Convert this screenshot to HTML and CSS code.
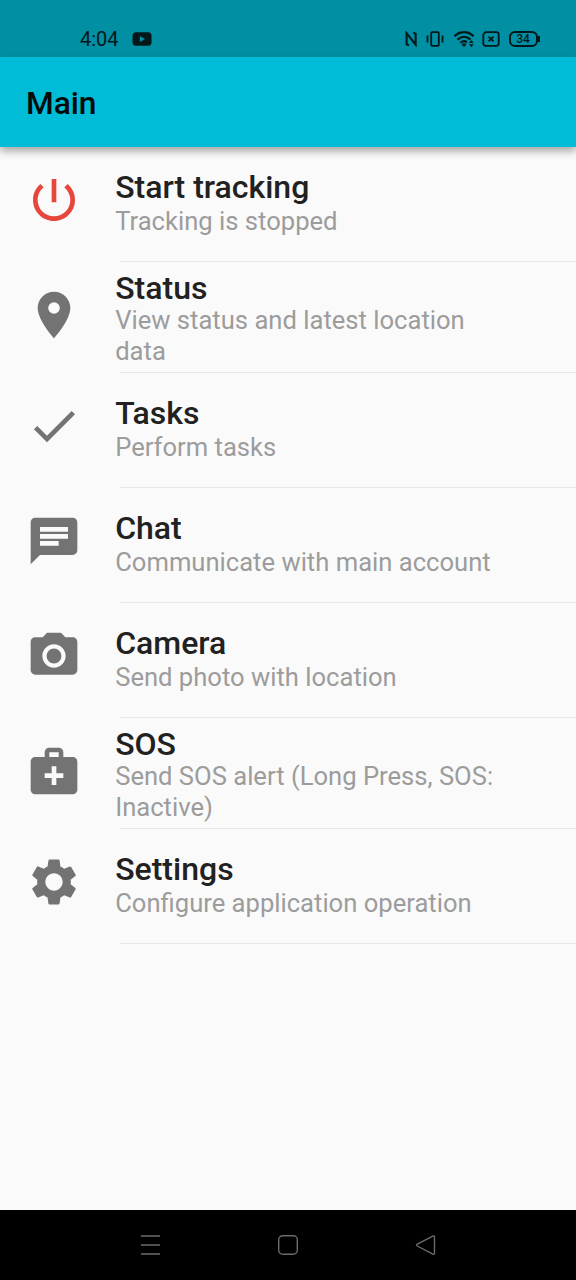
FILE: index.html
```html
<!DOCTYPE html>
<html lang="en">
<head>
    <meta charset="UTF-8">
    <meta name="viewport" content="width=device-width, initial-scale=1.0">
    <title>Main</title>
    <link rel="stylesheet" href="styles.css">
</head>
<body>
    <div class="status-bar">
        <span class="clock">4:04</span>
        <svg class="youtube" width="20" height="14" viewBox="0 0 20 14"><rect x="0.5" y="0.3" width="19" height="13.4" rx="3.5" fill="#04181b"/><path d="M7.8 4v6l5.2-3z" fill="#008fa3"/></svg>
        <div class="status-icons">
            <svg class="nfc" width="12" height="16" viewBox="0 0 12 16"><path d="M4 14.400L1.600 13.400V2.200L10.600 13.600V2.600L8.200 1.600"/></svg>
            <svg class="vibrate" width="18" height="16" viewBox="0 0 18 16"><rect x="5.200" y="1.200" width="7.600" height="13.600" rx="1"/><path d="M1.500 4.500v7M16.500 4.500v7"/></svg>
            <svg class="wifi" width="22" height="18" viewBox="0 0 22 18"><path d="M1.500 6.200C7 .700 15 .700 20.500 6.200M4.500 9.600c4-3.800 9-3.800 13 0M7.500 12.800c2.200-1.900 4.600-1.900 6.500-.500" stroke-width="2.200"/><path d="M8.500 14.500l2.500-1.500 2.500 1.500L11 17z" class="solid"/><path d="M16 13l2.300-3 2.300 3zM16 14.300l2.300 3 2.300-3z" class="solid"/></svg>
            <svg class="sim" width="18" height="16" viewBox="0 0 18 16"><path d="M3.500 1.200h11q2.200 0 2.200 2.200v9.200q0 2.200-2.200 2.200h-11q-2.200 0-2.200-2.200V3.400z"/><path d="M6.500 5.600l5 4.800M11.500 5.600l-5 4.800"/></svg>
            <div class="battery">34</div>
        </div>
    </div>
    <header class="app-bar">
        <h1>Main</h1>
    </header>
    <ul class="menu">
        <li class="menu-item">
            <svg class="icon power" viewBox="0 0 24 24"><path d="M13 3h-2v10h2V3zm4.830 2.170l-1.420 1.420C17.990 7.860 19 9.810 19 12c0 3.870-3.130 7-7 7s-7-3.130-7-7c0-2.190 1.010-4.140 2.580-5.420L6.170 5.170C4.230 6.820 3 9.260 3 12c0 4.970 4.030 9 9 9s9-4.030 9-9c0-2.740-1.230-5.180-3.170-6.830z"/></svg>
            <div class="text">
                <h2>Start tracking</h2>
                <p>Tracking is stopped</p>
            </div>
        </li>
        <li class="menu-item two-line">
            <svg class="icon" viewBox="0 0 24 24"><path d="M12 2C8.130 2 5 5.130 5 9c0 5.250 7 13 7 13s7-7.750 7-13c0-3.870-3.130-7-7-7zm0 9.500a2.500 2.500 0 0 1 0-5 2.500 2.500 0 0 1 0 5z"/></svg>
            <div class="text">
                <h2>Status</h2>
                <p>View status and latest location data</p>
            </div>
        </li>
        <li class="menu-item">
            <svg class="icon" viewBox="0 0 24 24"><path d="M9 16.170L4.830 12l-1.420 1.410L9 19 21 7l-1.410-1.410z"/></svg>
            <div class="text">
                <h2>Tasks</h2>
                <p>Perform tasks</p>
            </div>
        </li>
        <li class="menu-item">
            <svg class="icon" viewBox="0 0 24 24"><path d="M20 2H4c-1.100 0-1.990.900-1.990 2L2 22l4-4h14c1.100 0 2-.900 2-2V4c0-1.100-.900-2-2-2zM6 9h12v2H6V9zm8 5H6v-2h8v2zm4-6H6V6h12v2z"/></svg>
            <div class="text">
                <h2>Chat</h2>
                <p>Communicate with main account</p>
            </div>
        </li>
        <li class="menu-item">
            <svg class="icon" viewBox="0 0 24 24"><circle cx="12" cy="12" r="3.200"/><path d="M9 2L7.170 4H4c-1.100 0-2 .900-2 2v12c0 1.100.900 2 2 2h16c1.100 0 2-.900 2-2V6c0-1.100-.900-2-2-2h-3.170L15 2H9zm3 15c-2.760 0-5-2.240-5-5s2.240-5 5-5 5 2.240 5 5-2.240 5-5 5z"/></svg>
            <div class="text">
                <h2>Camera</h2>
                <p>Send photo with location</p>
            </div>
        </li>
        <li class="menu-item two-line">
            <svg class="icon" viewBox="0 0 24 24"><path d="M20 6h-4V4c0-1.100-.900-2-2-2h-4c-1.100 0-2 .900-2 2v2H4c-1.100 0-2 .900-2 2v12c0 1.100.900 2 2 2h16c1.100 0 2-.900 2-2V8c0-1.100-.900-2-2-2zM10 4h4v2h-4V4zm6 11h-3v3h-2v-3H8v-2h3v-3h2v3h3v2z"/></svg>
            <div class="text">
                <h2>SOS</h2>
                <p>Send SOS alert (Long Press, SOS: Inactive)</p>
            </div>
        </li>
        <li class="menu-item">
            <svg class="icon" viewBox="0 0 24 24"><path d="M19.140 12.940c.040-.300.060-.610.060-.940 0-.320-.020-.640-.070-.940l2.030-1.580c.180-.140.230-.410.120-.610l-1.920-3.320c-.120-.220-.370-.290-.590-.220l-2.390.960c-.500-.380-1.030-.700-1.620-.940l-.360-2.540c-.040-.240-.240-.410-.480-.410h-3.840c-.240 0-.430.170-.470.410l-.360 2.540c-.590.240-1.130.570-1.620.940l-2.390-.960c-.220-.080-.470 0-.590.220L2.740 8.870c-.120.210-.080.470.120.610l2.030 1.580c-.050.300-.090.630-.090.940s.020.640.070.940l-2.030 1.580c-.180.140-.230.410-.120.610l1.920 3.320c.120.220.370.290.590.220l2.390-.960c.500.380 1.030.700 1.620.940l.360 2.540c.050.240.240.410.480.410h3.840c.240 0 .440-.170.470-.410l.360-2.540c.590-.240 1.130-.560 1.620-.940l2.390.960c.220.080.470 0 .590-.220l1.920-3.320c.120-.220.070-.470-.120-.610l-2.010-1.580zM12 15.700c-2.040 0-3.700-1.660-3.700-3.700s1.660-3.700 3.700-3.700 3.700 1.660 3.700 3.700-1.660 3.700-3.700 3.700z"/></svg>
            <div class="text">
                <h2>Settings</h2>
                <p>Configure application operation</p>
            </div>
        </li>
    </ul>
    <nav class="nav-bar">
        <svg width="22" height="22" viewBox="0 0 22 22"><path d="M2 2h19M2 11h19M2 20h19"/></svg>
        <svg width="22" height="22" viewBox="0 0 22 22"><rect x="1.700" y="1.700" width="18.600" height="18.600" rx="4"/></svg>
        <svg width="22" height="22" viewBox="0 0 22 22"><path d="M2.300 10.200L17.800 2.100q1.700-.800 1.700 1v16q0 1.800-1.700 1L2.300 12q-1.500-.900 0-1.800z"/></svg>
    </nav>
</body>
</html>
```

FILE: styles.css
```css
* {
    box-sizing: border-box;
}

body {
    font-family: Roboto, sans-serif;
    background-color: #fafafa;
    color: #212121;
    margin: 0;
    height: 1280px;
    display: flex;
    flex-direction: column;
}

h1, h2, p {
    margin: 0;
}

.status-bar {
    height: 57px;
    padding: 20px 36px 0 80px;
    background-color: #008fa3;
    color: #04181b;
    display: flex;
    align-items: center;
}

.clock {
    font-size: 20px;
    line-height: 36px;
}

.youtube {
    margin-left: 13.5px;
}

.status-icons {
    display: flex;
    align-items: center;
    margin-left: auto;
}

.status-icons svg {
    fill: none;
    stroke: #04181b;
    stroke-width: 1.8;
}

.status-icons .nfc {
    stroke-width: 2.1;
}

.status-icons .solid {
    fill: #04181b;
    stroke: none;
}

.vibrate {
    margin-left: 9px;
}

.wifi {
    margin-left: 9px;
}

.sim {
    margin-left: 7px;
}

.battery {
    width: 29px;
    height: 16px;
    margin-left: 9px;
    margin-right: 2.5px;
    border: 2px solid #04181b;
    border-radius: 6px;
    font-size: 12px;
    font-weight: 500;
    line-height: 12px;
    text-align: center;
    position: relative;
}

.battery::after {
    content: "";
    position: absolute;
    right: -4px;
    top: 3px;
    width: 1.5px;
    height: 6px;
    background-color: #04181b;
}

.app-bar {
    height: 90px;
    padding-left: 26px;
    background-color: #00bcd7;
    color: #04090a;
    display: flex;
    align-items: center;
    box-shadow: 0 4px 8px rgba(0, 0, 0, 0.35);
    z-index: 1;
}

.app-bar h1 {
    font-size: 31.7px;
    font-weight: 500;
    line-height: 36px;
    padding-top: 4px;
}

.menu {
    list-style: none;
    margin: 0;
    padding: 0;
    flex: 1;
}

.menu-item {
    height: 115px;
    padding: 25px 60px 0 25.5px;
    display: flex;
    align-items: flex-start;
    background: linear-gradient(#e8e8e8, #e8e8e8) no-repeat 120px 100% / 100% 1px;
}

.menu-item.two-line {
    height: 111px;
}

.icon {
    width: 56px;
    height: 56px;
    flex: none;
    fill: #737373;
}

.icon.power {
    fill: #e6463c;
}

.text {
    margin-left: 33.7px;
    margin-top: -3px;
}

.two-line .text {
    margin-top: -17px;
}

.text h2 {
    font-size: 32px;
    font-weight: 500;
    line-height: 36px;
}

.text p {
    font-size: 25.6px;
    line-height: 30px;
    padding-top: 1px;
    color: #9c9c9c;
}

.two-line .text p {
    line-height: 30.5px;
    padding-top: 0;
    margin-top: -1px;
}

.nav-bar {
    height: 70px;
    background-color: #000;
    display: flex;
    align-items: center;
    justify-content: center;
    gap: 116px;
}

.nav-bar svg {
    fill: none;
    stroke: #6b6b6b;
    stroke-width: 1.400;
}
```
